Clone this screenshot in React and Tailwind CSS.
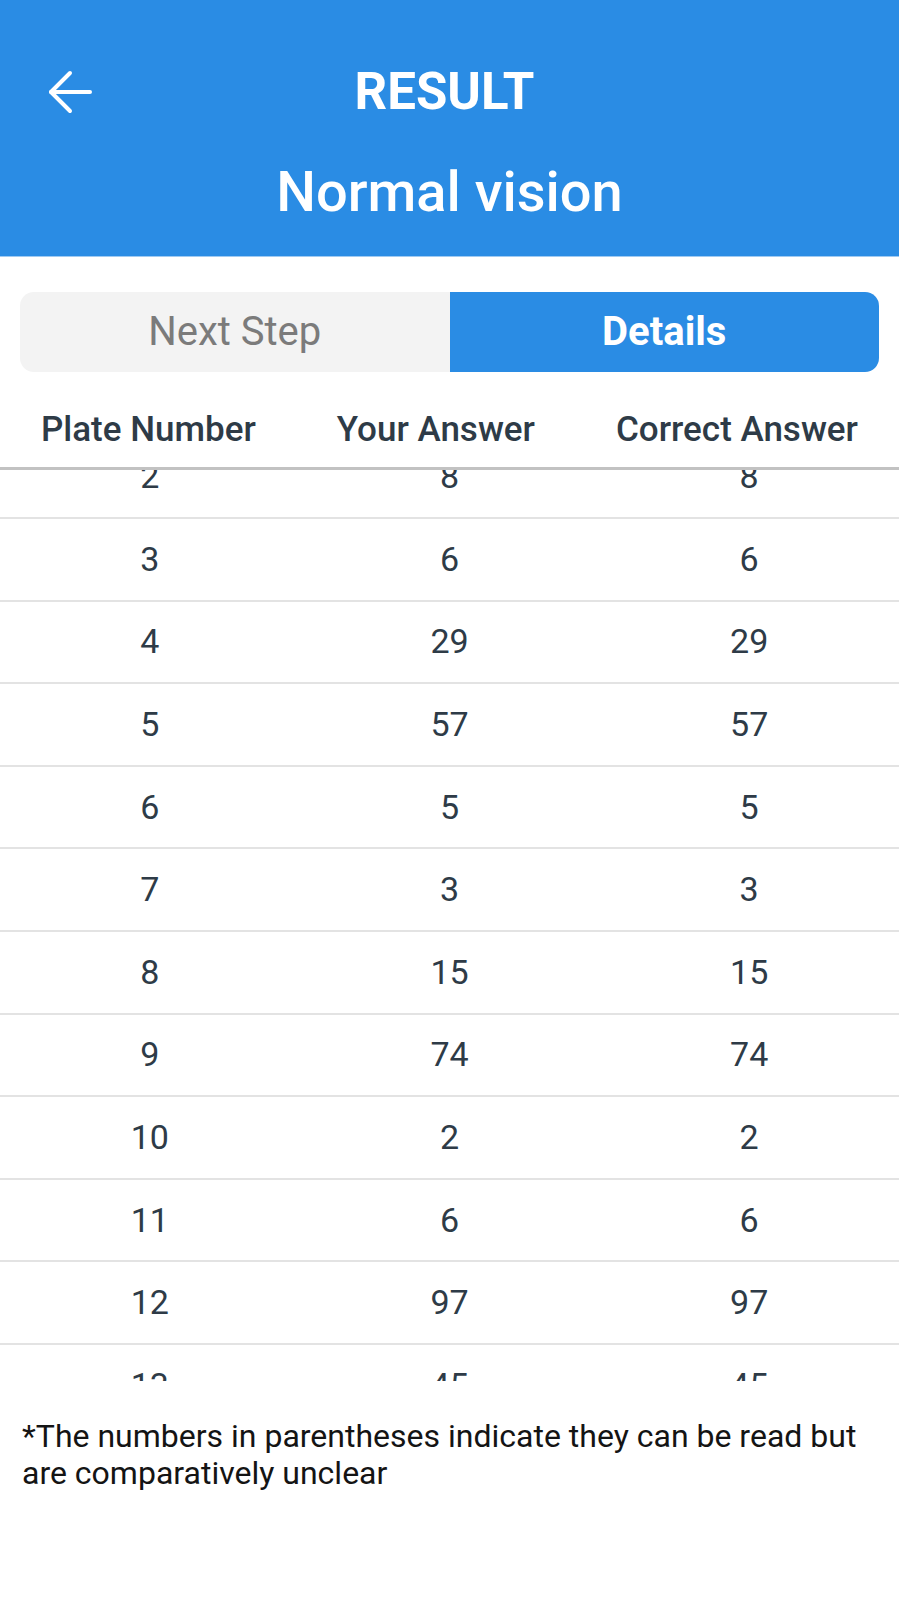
import React from 'react';

const ROWS = [
  [1, '12', '12'],
  [2, '8', '8'],
  [3, '6', '6'],
  [4, '29', '29'],
  [5, '57', '57'],
  [6, '5', '5'],
  [7, '3', '3'],
  [8, '15', '15'],
  [9, '74', '74'],
  [10, '2', '2'],
  [11, '6', '6'],
  [12, '97', '97'],
  [13, '45', '45'],
  [14, '5', '5'],
  [15, '7', '7'],
];

const BackArrow = () => (
  <svg width="44" height="44" viewBox="0 0 44 44" fill="none" stroke="white" strokeWidth="4" strokeLinecap="round" strokeLinejoin="round">
    <path d="M42 22H3" />
    <path d="M22 3 3 22l19 19" />
  </svg>
);

export default function App() {
  return (
    <div className="min-h-[1599px] w-full bg-white" style={{ fontFamily: 'Roboto, "Noto Sans", sans-serif' }}>
      {/* header */}
      <div className="flex h-[256px] flex-col bg-[#2a8ce4] pt-[62px]">
        <div className="grid h-[60px] grid-cols-[1fr_auto_1fr] items-center">
          <div className="pl-[48px]">
            <BackArrow />
          </div>
          <div className="mr-[10px] text-[51px] font-bold leading-[60px] text-white">RESULT</div>
          <div />
        </div>
        <div className="mt-[37px] text-center text-[56px] font-medium leading-[66px] text-white">
          Normal vision
        </div>
      </div>
      <div className="h-[1px] bg-[#9fcaf2]" />

      {/* tabs */}
      <div className="mx-[20px] mt-[35px] flex h-[80px] overflow-hidden rounded-[14px]">
        <button className="flex flex-1 items-center justify-center bg-[#f3f3f3] text-[40px] text-[#7b7b7b]">
          Next Step
        </button>
        <button className="flex flex-1 items-center justify-center bg-[#2a8ce4] text-[40px] font-bold text-white">
          Details
        </button>
      </div>

      {/* table header */}
      <div className="flex h-[95px] items-start justify-between px-[41px] pt-[37px] text-[35px] font-medium leading-[42px] text-[#2e3b47]">
        <span>Plate Number</span>
        <span>Your Answer</span>
        <span>Correct Answer</span>
      </div>
      <div className="h-[3px] bg-[#c2c2c2]" />

      {/* rows, scrolled */}
      <div className="h-[911px] overflow-hidden">
        <div className="mt-[-116.2px]">
          {ROWS.map(([plate, yours, correct]) => (
            <div
              key={plate}
              className="grid h-[82.6px] grid-cols-3 items-center border-b-2 border-[#e3e3e3] text-center text-[34px] text-[#2e3b47]"
            >
              <span>{plate}</span>
              <span>{yours}</span>
              <span>{correct}</span>
            </div>
          ))}
        </div>
      </div>

      {/* note */}
      <p className="mt-[37px] px-[22px] text-[32px] leading-[37px] text-[#141414]">
        *The numbers in parentheses indicate they can be read but are comparatively unclear
      </p>
    </div>
  );
}
